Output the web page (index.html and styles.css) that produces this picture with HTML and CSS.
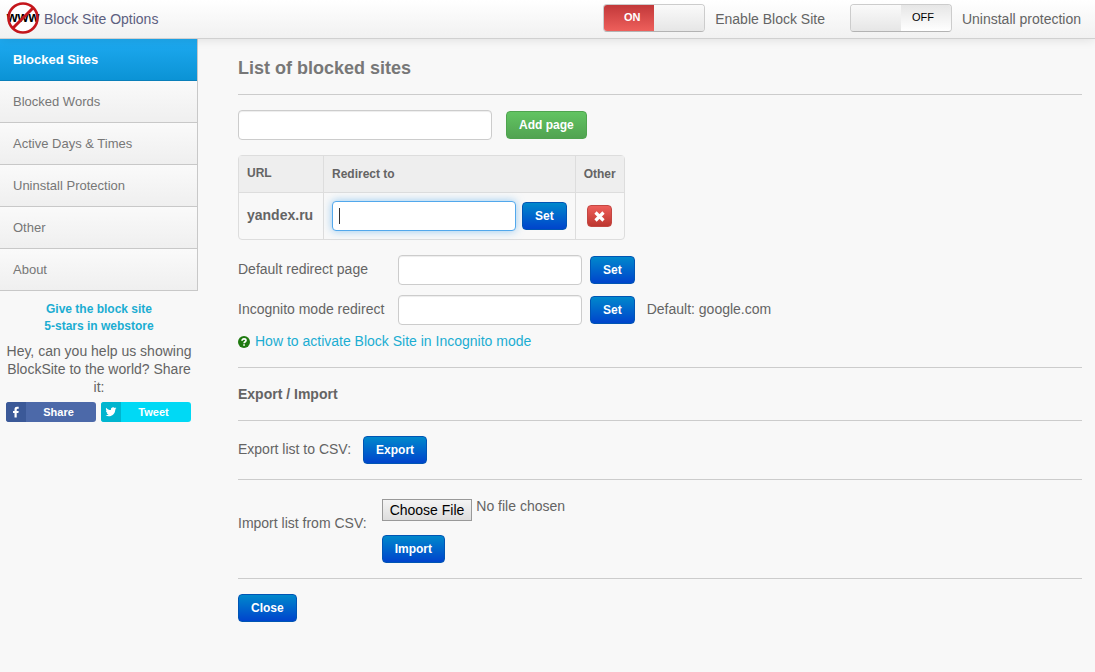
FILE: index.html
```html
<!DOCTYPE html>
<html lang="en">
<head>
  <meta charset="utf-8">
  <title>Block Site Options</title>
  <meta name="viewport" content="width=device-width, initial-scale=1">
  <link rel="stylesheet" href="styles.css">
</head>
<body>
  <header class="navbar">
    <div class="brand">
      <svg class="logo" width="34" height="34" viewBox="0 0 34 34" aria-hidden="true">
        <circle cx="17" cy="16" r="14" fill="#fff"/>
        <text x="17" y="20" text-anchor="middle">www</text>
        <circle cx="17" cy="16" r="14.500" fill="none" stroke="#c4161c" stroke-width="2.600"/>
        <path d="M6.500 26.500L27.500 5.500" stroke="#c4161c" stroke-width="3"/>
      </svg>
      <span>Block Site Options</span>
    </div>
    <div class="switches">
      <label class="switch">
        <input type="checkbox" checked>
        <span class="track"><span class="on">ON</span><span class="knob"></span><span class="off">OFF</span></span>
        Enable Block Site
      </label>
      <label class="switch">
        <input type="checkbox">
        <span class="track"><span class="on">ON</span><span class="knob"></span><span class="off">OFF</span></span>
        Uninstall protection
      </label>
    </div>
  </header>

  <div class="page">
    <aside class="sidebar">
      <nav class="menu">
        <a class="active" href="#sites">Blocked Sites</a>
        <a href="#words">Blocked Words</a>
        <a href="#days">Active Days &amp; Times</a>
        <a href="#uninstall">Uninstall Protection</a>
        <a href="#other">Other</a>
        <a href="#about">About</a>
      </nav>
      <a class="rate" href="#rate">Give the block site<br>5-stars in webstore</a>
      <p class="help">Hey, can you help us showing BlockSite to the world? Share it:</p>
      <div class="share">
        <a class="facebook" href="#share">
          <svg width="20" height="20" viewBox="0 0 20 20" aria-hidden="true"><path d="M8.500 15.500V11H7V8.900h1.500V7.400C8.500 5.500 9.500 4.800 11 4.800h1.700v2h-1c-.7 0-1 .3-1 .9v1.200h2l-.3 2.100h-1.700v4.500z" fill="#fff"/></svg>
          <span>Share</span>
        </a>
        <a class="twitter" href="#tweet">
          <svg width="20" height="20" viewBox="0 0 20 20" aria-hidden="true"><path d="M15.500 6.300c-.4.2-.8.3-1.300.4.500-.3.800-.7 1-1.200-.4.200-.9.400-1.400.5a2.300 2.300 0 0 0-3.900 2.100C8 8 6.300 7.100 5.200 5.700c-.6 1-.3 2.300.7 3-.4 0-.7-.1-1-.3 0 1.100.8 2 1.800 2.300-.3.100-.7.100-1 0 .3.900 1.100 1.600 2.100 1.600-1 .7-2.200 1-3.300.9 3.900 2.400 9.600.3 9.800-5.800.5-.3.900-.7 1.200-1.100z" fill="#fff"/></svg>
          <span>Tweet</span>
        </a>
      </div>
    </aside>

    <main class="content">
      <h1>List of blocked sites</h1>
      <hr>
      <form class="add">
        <input type="text" aria-label="Page to block">
        <button type="button" class="btn green">Add page</button>
      </form>

      <table class="sites">
        <thead>
          <tr><th class="url">URL</th><th>Redirect to</th><th>Other</th></tr>
        </thead>
        <tbody>
          <tr>
            <td class="url">yandex.ru</td>
            <td>
              <div class="redirect">
                <input type="text" aria-label="Redirect yandex.ru to" autofocus>
                <button type="button" class="btn">Set</button>
              </div>
            </td>
            <td>
              <button type="button" class="btn red" aria-label="Remove">
                <svg width="11" height="11" viewBox="0 0 11 11" aria-hidden="true"><path d="M1.500 1.500l8 8M9.500 1.500l-8 8" stroke="#fff" stroke-width="3.200"/></svg>
              </button>
            </td>
          </tr>
        </tbody>
      </table>

      <div class="defaults">
        <label for="default">Default redirect page</label>
        <input type="text" id="default">
        <button type="button" class="btn">Set</button>
        <span></span>
        <label for="incognito">Incognito mode redirect</label>
        <input type="text" id="incognito">
        <button type="button" class="btn">Set</button>
        <span class="hint">Default: google.com</span>
      </div>
      <a class="howto" href="#incognito-help">
        <svg width="12" height="12" viewBox="0 0 12 12" aria-hidden="true">
          <circle cx="6" cy="6" r="6" fill="#1f7a10"/>
          <path d="M4 4.700C4 3.400 4.900 2.900 6 2.900s2 .6 2 1.600c0 1.300-1.900 1.300-1.900 2.800" fill="none" stroke="#fff" stroke-width="1.700"/>
          <path d="M5.200 8.200h1.700v1.600H5.200z" fill="#fff"/>
        </svg>
        How to activate Block Site in Incognito mode
      </a>
      <hr>
      <h2>Export / Import</h2>
      <hr>
      <div class="export">
        <span>Export list to CSV:</span>
        <button type="button" class="btn">Export</button>
      </div>
      <hr>
      <form class="import">
        <label for="csv">Import list from CSV:</label>
        <div class="upload">
          <input type="file" id="csv">
          <button type="button" class="btn">Import</button>
        </div>
      </form>
      <hr>
      <button type="button" class="btn">Close</button>
    </main>
  </div>
</body>
</html>
```
FILE: styles.css
```css
* {
  box-sizing: border-box;
}
body {
  margin: 0;
  background: #f8f8f8;
  color: #646464;
  font: 14px/20px "Liberation Sans", Arial, sans-serif;
}
a {
  color: #1badd2;
  text-decoration: none;
}

/* top bar */
.navbar {
  position: relative;
  display: flex;
  justify-content: space-between;
  height: 39px;
  padding: 0 14px 0 6px;
  background: linear-gradient(#fff, #f1f1f1);
  border-bottom: 1px solid #d0d0d0;
  box-shadow: 0 1px 10px rgba(0,0,0,.1);
}
.brand {
  display: flex;
  align-items: center;
  gap: 4px;
  color: #5c6080;
}
.logo text {
  font-size: 14px;
  font-weight: bold;
}
.switches {
  display: flex;
  gap: 25px;
}
.switch {
  display: flex;
  align-items: center;
  gap: 10px;
}
.switch input {
  position: absolute;
  opacity: 0;
}
.track {
  display: flex;
  width: 102px;
  height: 28px;
  margin-bottom: 3px;
  overflow: hidden;
  border: 1px solid #ccc;
  border-bottom-color: #b3b3b3;
  border-radius: 4px;
  font-size: 11px;
  line-height: 25px;
  text-align: center;
}
.on, .off, .knob {
  width: 50%;
}
.on {
  display: none;
  padding-left: 6px;
  background: linear-gradient(#c2383a, #ee5f5b);
  color: #fff;
  font-weight: bold;
}
.off {
  padding-right: 6px;
  background: linear-gradient(#e6e6e6, #fff);
  color: #000;
}
.knob {
  background: linear-gradient(#fafafa, #e6e6e6);
}
.switch input:checked + .track .on {
  display: block;
}
.switch input:checked + .track .off {
  display: none;
}

.page {
  display: flex;
}

/* left column */
.sidebar {
  width: 198px;
  text-align: center;
}
.menu {
  border-right: 1px solid #c8c8c8;
  text-align: left;
}
.menu a {
  display: block;
  height: 42px;
  padding-left: 13px;
  background: linear-gradient(#fafafa, #efefef);
  border-bottom: 1px solid #c8c8c8;
  color: #777;
  font-size: 13px;
  line-height: 41px;
}
.menu a.active {
  background: linear-gradient(#1eaaf1, #0b93d5);
  border-color: #0a7fba;
  color: #fff;
  font-weight: bold;
}
.rate {
  display: block;
  margin-top: 10px;
  font-size: 12px;
  font-weight: bold;
  line-height: 17px;
}
.help {
  margin: 7px 0 6px;
  line-height: 18px;
}
.share {
  display: flex;
  gap: 5px;
  padding: 0 6px;
}
.share a {
  display: flex;
  width: 90px;
  height: 20px;
  overflow: hidden;
  border-radius: 3px;
  color: #fff;
  font-size: 11px;
  font-weight: bold;
}
.share span {
  flex: 1;
  padding-right: 5px;
}
.facebook {
  background: #4c69a9;
}
.facebook svg {
  background: #3b5998;
}
.twitter {
  background: #00d9f5;
}
.twitter svg {
  background: #00b5cf;
}

/* right column */
.content {
  flex: 1;
  padding: 19px 13px 40px 40px;
}
h1 {
  margin: 0;
  color: #777;
  font-size: 18px;
  line-height: 21px;
}
h2 {
  margin: 0;
  font-size: 14px;
  line-height: 22px;
}
hr {
  margin: 15px 0;
  border: 0;
  border-top: 1px solid #ccc;
}
input[type=text] {
  width: 184px;
  height: 30px;
  padding: 4px 6px;
  background: #fff;
  border: 1px solid #ccc;
  border-radius: 4px;
  box-shadow: inset 0 1px 1px rgba(0,0,0,.075);
  color: #555;
  font: inherit;
}
input[type=text]:focus {
  border-color: #52a8ec;
  box-shadow: 0 0 8px rgba(82,168,236,.6);
  outline: none;
}
.redirect input[type=text]:focus {
  background: linear-gradient(#333, #333) 6px center / 1px 16px no-repeat #fff;
  caret-color: transparent;
}
.btn {
  height: 28px;
  padding: 0 12px;
  background: linear-gradient(#08c, #04c);
  border: 1px solid #0055b4;
  border-radius: 4px;
  color: #fff;
  font: bold 12px/20px "Liberation Sans", Arial, sans-serif;
}
.btn.green {
  background: linear-gradient(#62c462, #51a351);
  border-color: #4fa44f;
}
.btn.red {
  display: block;
  width: 25px;
  height: 22px;
  margin: 0 auto;
  padding: 4px 6px;
  background: linear-gradient(#ee5f5b, #bd362f);
  border-color: #c34742;
  line-height: 0;
}
.add {
  display: flex;
  align-items: center;
  gap: 14px;
}
.add input[type=text] {
  width: 254px;
}

.sites {
  margin: 15px 0;
  border: 1px solid #ddd;
  border-spacing: 0;
  border-radius: 4px;
}
.sites th {
  height: 36px;
  padding: 0 8px;
  background: #eee;
  font-size: 12px;
  text-align: left;
}
.sites td {
  height: 47px;
  padding: 0 8px;
  border-top: 1px solid #ddd;
}
.sites th + th, .sites td + td {
  border-left: 1px solid #ddd;
}
.sites .url {
  width: 84px;
  padding-bottom: 2px;
  font-weight: bold;
}
.redirect {
  display: flex;
  align-items: center;
  gap: 6px;
}

.defaults {
  display: grid;
  grid-template-columns: 152px 184px auto 1fr;
  align-items: center;
  gap: 10px 8px;
}
.defaults label, .hint, .export span {
  padding-bottom: 2px;
}
.hint {
  padding-left: 4px;
}
.howto {
  display: flex;
  align-items: center;
  gap: 5px;
  margin-top: 6px;
  line-height: 21px;
}
.export {
  display: flex;
  align-items: center;
  gap: 12px;
}
.import {
  display: flex;
  align-items: center;
  gap: 15px;
}
.import label {
  padding-bottom: 12px;
}
.upload input {
  display: block;
  height: 22px;
  margin: 4px 0 14px;
  font: inherit;
  line-height: 14px;
}
.upload input::file-selector-button {
  height: 22px;
  margin: 0 4px 0 0;
  padding: 0 7px;
  background: linear-gradient(#f4f4f4, #ddd);
  border: 1px solid #999;
  color: #000;
  font: inherit;
  vertical-align: top;
}
```
